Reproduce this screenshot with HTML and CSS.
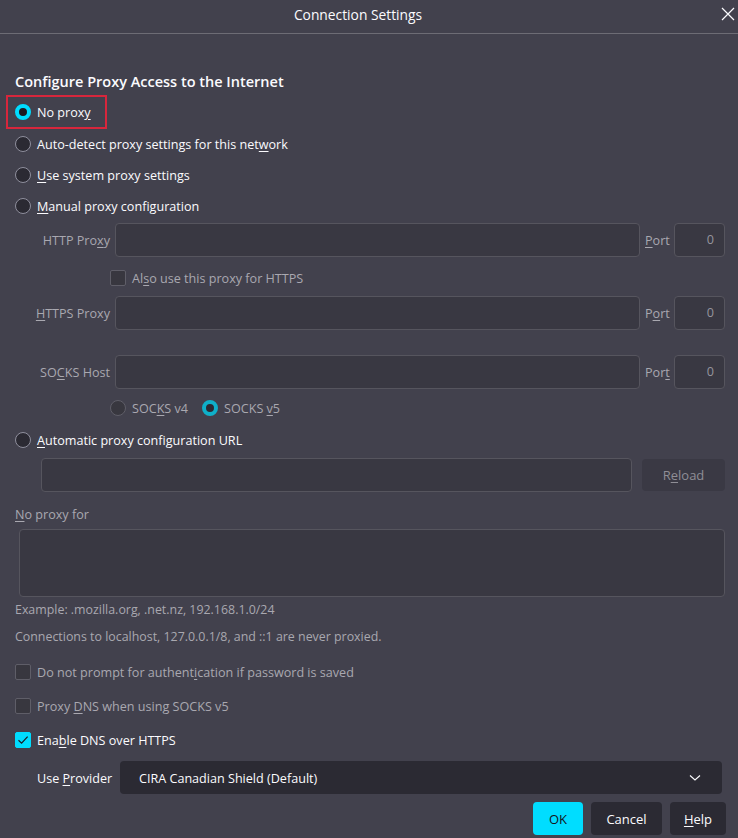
FILE: index.html
```html
<!DOCTYPE html>
<html lang="en">
<head>
<meta charset="utf-8">
<title>Connection Settings</title>
<link rel="stylesheet" href="styles.css">
</head>
<body>
<div class="dialog">
  <header class="titlebar">
    <span class="title">Connection Settings</span>
    <svg class="close" width="14" height="14" viewBox="0 0 14 14"><path d="M1 1L13 13M13 1L1 13" stroke="#fbfbfe" stroke-width="1.2" fill="none"/></svg>
  </header>
  <main class="content">
    <h1 class="heading">Configure Proxy Access to the Internet</h1>
    <div class="row radio-row focused"><span class="radio checked"></span><span>No prox<u>y</u></span></div>
    <div class="row radio-row"><span class="radio"></span><span>Auto-detect proxy settings for this net<u>w</u>ork</span></div>
    <div class="row radio-row"><span class="radio"></span><span><u>U</u>se system proxy settings</span></div>
    <div class="row radio-row"><span class="radio"></span><span><u>M</u>anual proxy configuration</span></div>

    <div class="proxy-grid disabled">
      <label class="plabel">HTTP Pro<u>x</u>y</label>
      <div class="input"></div>
      <label class="portlabel"><u>P</u>ort</label>
      <div class="input port">0</div>

      <div class="check-line"><span class="checkbox"></span><span>Al<u>s</u>o use this proxy for HTTPS</span></div>

      <label class="plabel"><u>H</u>TTPS Proxy</label>
      <div class="input"></div>
      <label class="portlabel">P<u>o</u>rt</label>
      <div class="input port">0</div>

      <div class="spacer"></div>

      <label class="plabel">SO<u>C</u>KS Host</label>
      <div class="input"></div>
      <label class="portlabel">Por<u>t</u></label>
      <div class="input port">0</div>

      <div class="socks-line">
        <span class="sradio"><span class="radio"></span><span>SOC<u>K</u>S v4</span></span>
        <span class="sradio"><span class="radio checked dim"></span><span>SOCKS <u>v</u>5</span></span>
      </div>
    </div>

    <div class="row radio-row auto"><span class="radio"></span><span><u>A</u>utomatic proxy configuration URL</span></div>
    <div class="url-line">
      <div class="input url"></div>
      <div class="btn reload">R<u>e</u>load</div>
    </div>

    <div class="noproxy-label"><u>N</u>o proxy for</div>
    <div class="textarea"></div>
    <div class="hint first">Example: .mozilla.org, .net.nz, 192.168.1.0/24</div>
    <div class="hint second">Connections to localhost, 127.0.0.1/8, and ::1 are never proxied.</div>

    <div class="checks">
      <div class="row check-row dim-row"><span class="checkbox"></span><span>Do not prompt for authent<u>i</u>cation if password is saved</span></div>
      <div class="row check-row dim-row"><span class="checkbox"></span><span>Proxy <u>D</u>NS when using SOCKS v5</span></div>
      <div class="row check-row"><span class="checkbox checked"><svg width="16" height="16" viewBox="0 0 16 16"><path d="M3.5 8.2L6.6 11.2L12.6 4.6" stroke="#1c1b22" stroke-width="1.2" fill="none"/></svg></span><span>Ena<u>b</u>le DNS over HTTPS</span></div>
    </div>

    <div class="provider">
      <span class="provider-label">Use <u>P</u>rovider</span>
      <div class="select">
        <span>CIRA Canadian Shield (Default)</span>
        <svg class="chev" width="12" height="8" viewBox="0 0 12 8"><path d="M1 1.5L6 6L11 1.5" stroke="#fbfbfe" stroke-width="1.1" fill="none"/></svg>
      </div>
    </div>

    <div class="buttons">
      <div class="btn primary">OK</div>
      <div class="btn">Cancel</div>
      <div class="btn"><u>H</u>elp</div>
    </div>
  </main>
</div>
</body>
</html>
```

FILE: styles.css
```css
* { box-sizing: border-box; }
html, body { margin: 0; padding: 0; }
body {
  background: #42414d;
  color: #fbfbfe;
  font-family: "Open Sans", "Noto Sans", "Liberation Sans", sans-serif;
  font-size: 12.6px;
  width: 738px;
  height: 838px;
  overflow: hidden;
}
u { text-decoration: underline; text-underline-offset: 2px; text-decoration-thickness: 1px; }

.titlebar {
  height: 34px;
  border-bottom: 1px solid #6d6c75;
  display: flex;
  align-items: center;
  justify-content: center;
  position: relative;
}
.title { font-size: 13.8px; margin-top: -4px; margin-right: 22px; }
.close { position: absolute; right: 3px; top: 7px; }

.content { padding: 0 13px 0 15px; }

.heading {
  margin: 38px 0 5px;
  font-size: 14.5px;
  font-weight: 600;
  line-height: 20px;
  height: 20px;
}

.row { display: flex; align-items: center; gap: 6px; }
.row > span:last-child { padding-top: 1px; }
.radio-row { height: 31px; }
.radio-row.focused {
  outline: 2px solid #d7263c;
  outline-offset: 0;
  margin-left: -7px;
  padding-left: 7px;
  width: 97px;
  height: 30px;
  margin-bottom: 1px;
}

.radio {
  width: 16px; height: 16px;
  border-radius: 50%;
  border: 1px solid #8f8f9d;
  background: #2b2a33;
  flex: none;
  display: inline-block;
}
.radio.checked {
  border: 4px solid #00ddff;
  background: #1c1b22;
}
.radio.checked.dim { border-color: #0fb0c9; background: #2b2a33; }

.checkbox {
  width: 16px; height: 16px;
  border-radius: 2px;
  border: 1px solid #8f8f9d;
  background: #2b2a33;
  flex: none;
  display: inline-block;
}
.checkbox.checked { background: #00ddff; border-color: #00ddff; display: flex; align-items: center; justify-content: center; }
.checkbox.checked svg { margin: -1px; }

.proxy-grid {
  display: grid;
  grid-template-columns: 95px 1fr 24px 51px;
  column-gap: 5px;
  margin-top: 2px;
  align-items: center;
}
.plabel { text-align: right; color: #a9a8b0; white-space: nowrap; }
.portlabel { color: #a9a8b0; }
.input {
  height: 34px;
  background: #393842;
  border: 1px solid #56555e;
  border-radius: 4px;
}
.input.port { text-align: right; color: #96959d; padding: 7px 10px 0 0; }
.check-line {
  grid-column: 2 / 5;
  margin-left: -5px;
  display: flex; align-items: center; gap: 6px;
  height: 32px;
  margin-top: 5px;
  margin-bottom: 2px;
  color: #a9a8b0;
}
.check-line .checkbox, .socks-line .radio { border-color: #5f5e68; background: #38373f; }
.spacer { grid-column: 1 / 5; height: 25px; }
.socks-line {
  grid-column: 2 / 5;
  margin-left: -5px;
  margin-top: 9px;
  height: 20px;
  display: flex; align-items: center; gap: 14px;
  color: #a9a8b0;
}
.sradio { display: flex; align-items: center; gap: 6px; }

.radio-row.auto { margin-top: 6px; }
.url-line {
  display: flex;
  gap: 10px;
  align-items: center;
  margin-top: 3px;
  padding-left: 26px;
}
.input.url { flex: 1; height: 34px; }
.btn {
  height: 33px;
  border-radius: 4px;
  background: #2b2a33;
  display: flex; align-items: center; justify-content: center;
  font-size: 13px;
}
.btn.reload { width: 83px; height: 32px; background: #3a3944; color: #8f8e96; }

.noproxy-label { margin-top: 13px; height: 20px; line-height: 20px; color: #a9a8b0; }
.textarea {
  margin: 4px 0 0 4px;
  height: 68px;
  background: #393842;
  border: 1px solid #56555e;
  border-radius: 4px;
}
.hint { color: #a9a8b0; font-size: 12.4px; height: 20px; line-height: 20px; }
.hint.first { margin-top: 3px; }
.hint.second { margin-top: 7px; }

.checks { margin-top: 8px; }
.check-row { height: 34px; }
.dim-row { color: #a9a8b0; }
.dim-row .checkbox { border-color: #5f5e68; background: #38373f; }

.provider {
  display: flex;
  align-items: center;
  gap: 7px;
  margin-top: 4px;
  padding-left: 22px;
  margin-right: 3px;
}
.provider-label { width: 76px; white-space: nowrap; padding-top: 1px; }
.select {
  flex: 1;
  height: 33px;
  background: #2b2a33;
  border-radius: 4px;
  display: flex;
  align-items: center;
  justify-content: space-between;
  padding: 1px 21px 0 19px;
}

.buttons {
  display: flex;
  justify-content: flex-end;
  gap: 8px;
  margin-top: 8px;
  margin-right: -1px;
}
.buttons .btn:nth-child(1) { width: 50px; }
.buttons .btn:nth-child(2) { width: 71px; }
.buttons .btn:nth-child(3) { width: 56px; }
.btn.primary { background: #00ddff; color: #15141a; }
```
